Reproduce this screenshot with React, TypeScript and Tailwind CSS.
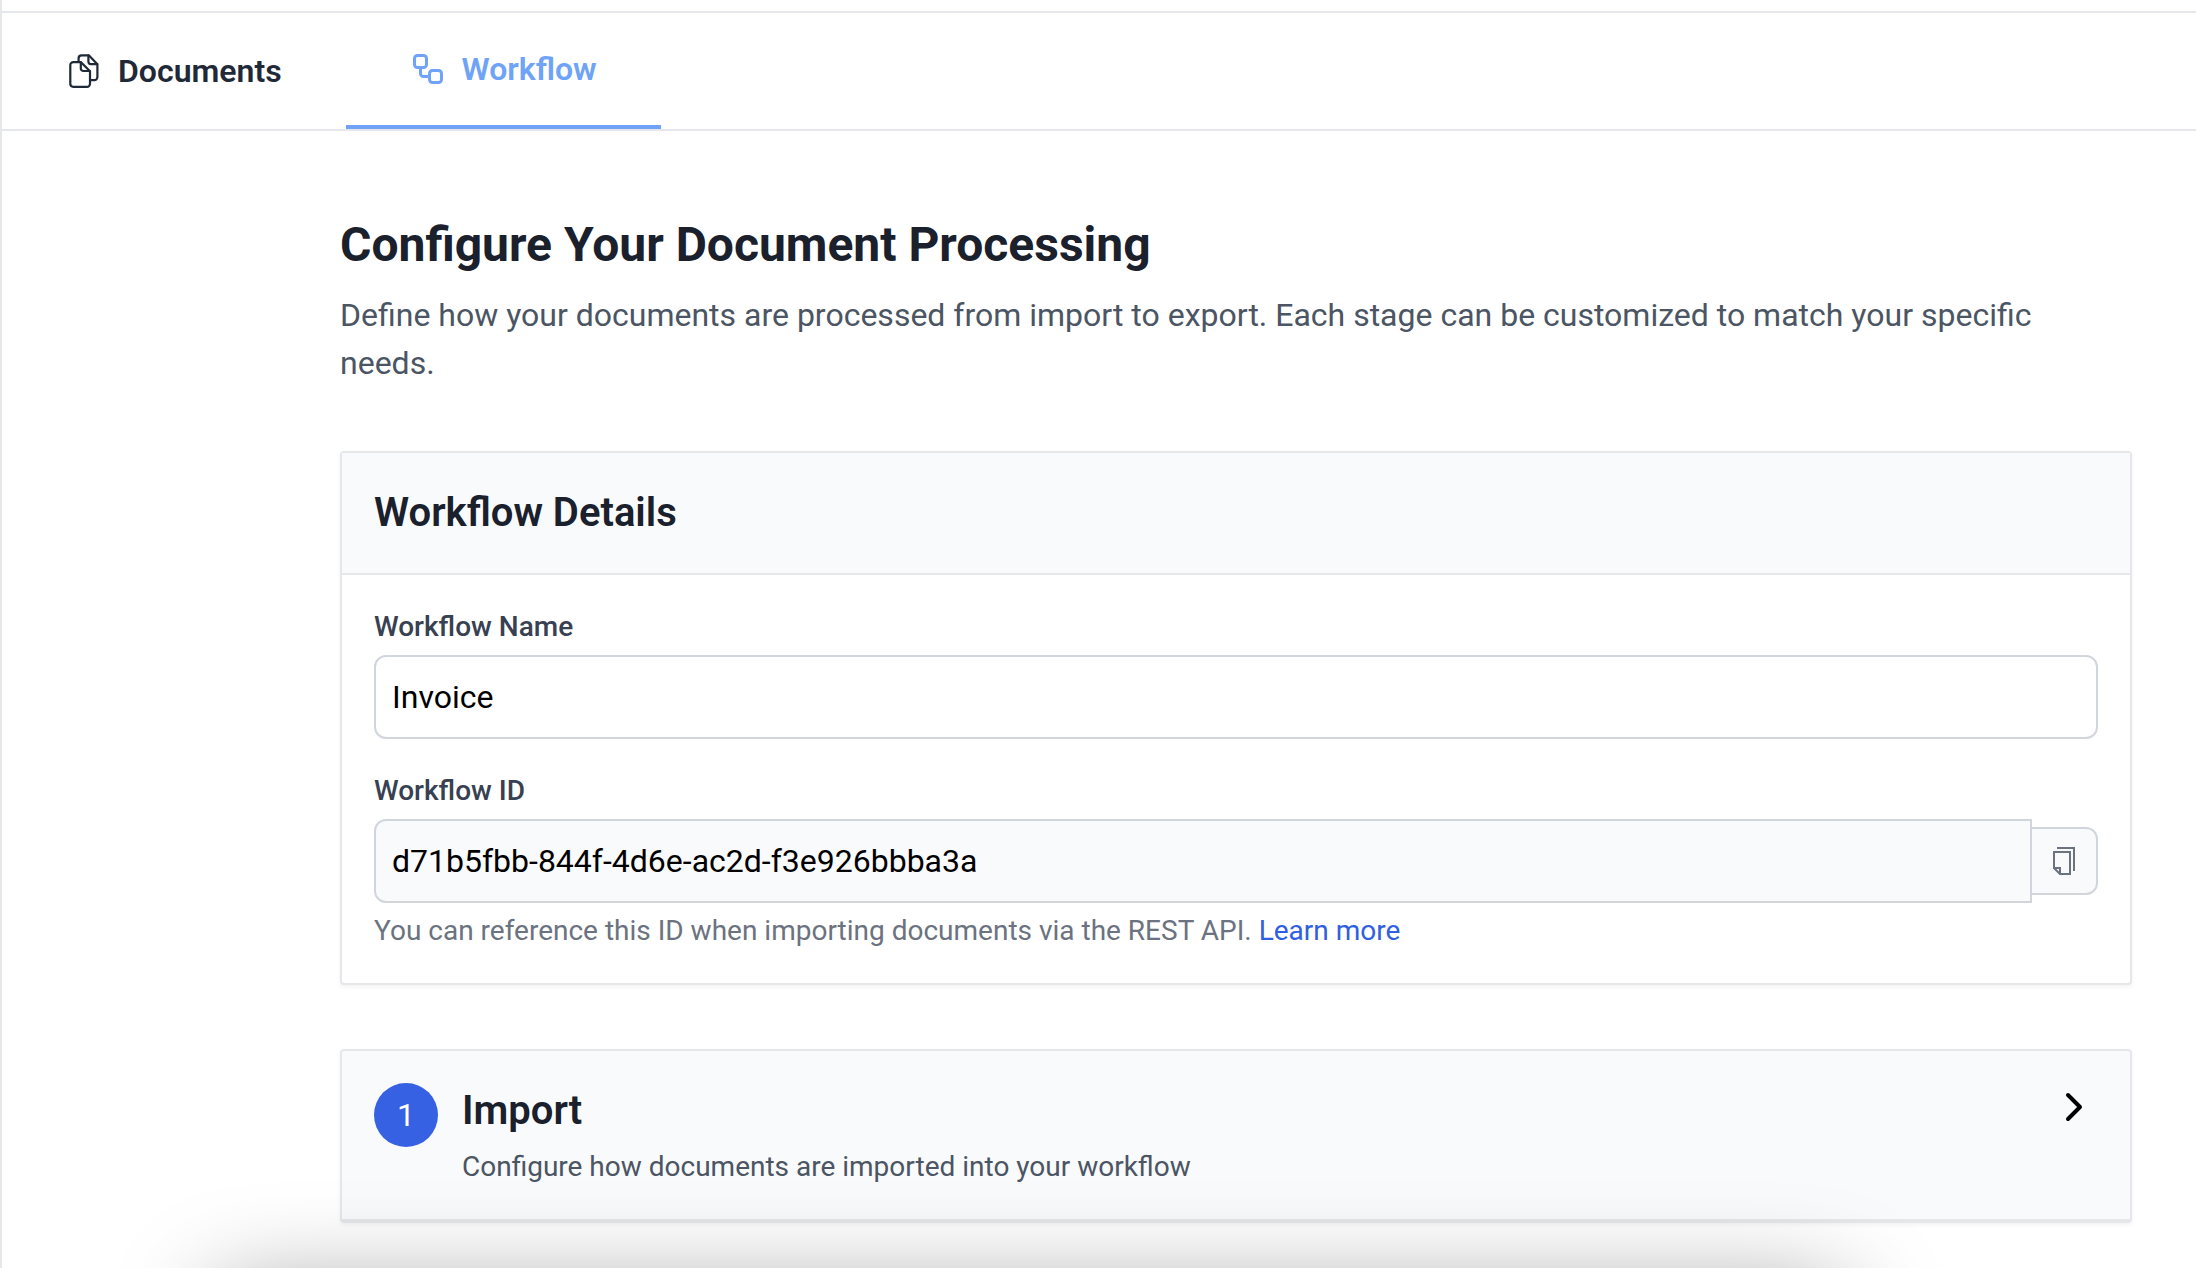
import { Workflow, ChevronRight } from "lucide-react";

function DocumentsIcon() {
  return (
    <svg viewBox="0 0 36 36" className="h-9 w-9" fill="none" stroke="currentColor" strokeWidth="2.2" strokeLinejoin="round" strokeLinecap="round" aria-hidden="true">
      <path d="M7.3 9.2H15l9 9v12.600a3 3 0 0 1-3 3H7.300a3 3 0 0 1-3-3V12.200a3 3 0 0 1 3-3z" />
      <path d="M14.800 9.400v6a2.600 2.600 0 0 0 2.600 2.600h6.400" />
      <path d="M12.600 9V5.300a3 3 0 0 1 3-3h7.200l8.600 9v12.800a3 3 0 0 1-3 3H24.400" />
      <path d="M22.400 2.500v6a2.600 2.600 0 0 0 2.600 2.600h6.200" />
    </svg>
  );
}

function CopyIcon() {
  return (
    <svg viewBox="0 0 32 32" className="h-8 w-8" fill="none" stroke="currentColor" strokeWidth="2" aria-hidden="true">
      <path d="M9 3h17v23" />
      <path d="M6 7h16v22H12l-6-6z" />
      <path d="M6 23h6v6" />
    </svg>
  );
}

export default function App() {
  return (
    <div className="relative h-screen overflow-hidden border-l-2 border-gray-200 bg-white font-['Roboto',sans-serif] text-black">
      <nav className="mt-[11px] flex h-[120px] border-y-2 border-gray-200">
        <a href="#documents" className="flex items-center gap-4 px-16 text-[32px] leading-12 font-semibold text-[#1f2937]">
          <DocumentsIcon />
          Documents
        </a>
        <a href="#workflow" aria-current="page" className="flex items-center gap-4 border-b-4 border-[#6fa3f8] px-16 text-[32px] leading-12 font-semibold text-[#6fa3f8]">
          <Workflow className="h-9 w-9" />
          Workflow
        </a>
      </nav>

      <main className="mr-16 ml-auto max-w-[1792px] pt-[82px]">
        <h1 className="text-5xl leading-16 font-bold text-[#1a202c]">Configure Your Document Processing</h1>
        <p className="mt-3.5 text-[32px] leading-12 text-[#4b5563]">
          Define how your documents are processed from import to export. Each stage can be customized to match your specific needs.
        </p>

        <section className="mt-16 rounded-sm border-2 border-gray-200 bg-white shadow-[0_2px_4px_0_rgba(0,0,0,0.05)]">
          <div className="border-b-2 border-gray-200 bg-[#f9fafc] p-8">
            <h2 className="text-[40px] leading-14 font-semibold text-[#1a202c]">Workflow Details</h2>
          </div>
          <div className="p-8">
            <label htmlFor="workflow-name" className="block text-[28px] leading-10 font-medium text-[#374151]">
              Workflow Name
            </label>
            <input
              id="workflow-name"
              defaultValue="Invoice"
              className="mt-2 block h-[84px] w-full rounded-xl border-2 border-gray-300 px-4 text-[32px] leading-12"
            />
            <label htmlFor="workflow-id" className="mt-8 block text-[28px] leading-10 font-medium text-[#374151]">
              Workflow ID
            </label>
            <div className="mt-2 flex items-center">
              <input
                id="workflow-id"
                readOnly
                defaultValue="d71b5fbb-844f-4d6e-ac2d-f3e926bbba3a"
                className="h-[84px] min-w-0 flex-1 rounded-l-xl border-2 border-gray-300 bg-[#f9fafc] px-4 text-[32px] leading-12"
              />
              <button aria-label="Copy workflow ID" className="rounded-r-xl border-2 border-l-0 border-gray-300 bg-[#f9fafc] p-4 text-[#6b7280]">
                <CopyIcon />
              </button>
            </div>
            <p className="mt-2 text-[28px] leading-10 text-[#6b7280]">
              You can reference this ID when importing documents via the REST API.{" "}
              <a href="#learn-more" className="text-[#2f5fe0]">Learn more</a>
            </p>
          </div>
        </section>

        <section className="mt-16 rounded-sm border-2 border-b-4 border-gray-200 bg-[#f9fafc] shadow-[0_2px_4px_0_rgba(0,0,0,0.05)]">
          <button className="flex w-full items-start gap-6 p-8 text-left">
            <span className="flex h-16 w-16 items-center justify-center rounded-full bg-[#3761e3] text-[32px] text-white">1</span>
            <span className="flex-1">
              <span className="block text-[40px] leading-14 font-semibold text-[#1a202c]">Import</span>
              <span className="mt-2 block text-[28px] leading-10 text-[#4b5563]">Configure how documents are imported into your workflow</span>
            </span>
            <ChevronRight className="h-12 w-12" />
          </button>
        </section>
      </main>

      {/* shadow of the bar that is docked just below the window */}
      <div className="pointer-events-none absolute top-full right-[350px] left-[210px] mt-6 h-40 rounded-3xl shadow-[0_0_100px_0_rgba(0,0,0,0.4)]" />
    </div>
  );
}
